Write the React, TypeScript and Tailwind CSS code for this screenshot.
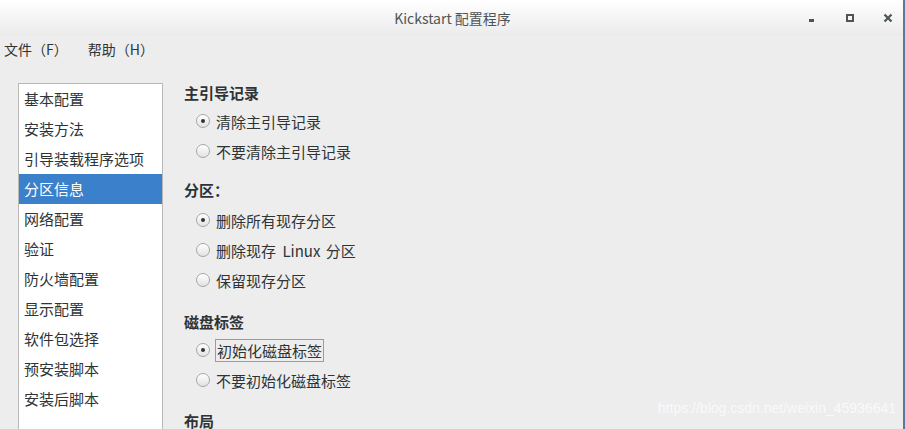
import { ReactNode } from "react";

const cjk = "font-['Noto_Sans_CJK_SC','Noto_Sans',sans-serif]";

const sections = [
  "基本配置",
  "安装方法",
  "引导装载程序选项",
  "分区信息",
  "网络配置",
  "验证",
  "防火墙配置",
  "显示配置",
  "软件包选择",
  "预安装脚本",
  "安装后脚本",
];

function Radio({ checked, focused, children }: { checked?: boolean; focused?: boolean; children: ReactNode }) {
  return (
    <div className="flex h-[30px] items-center pl-[12px]">
      <span className="flex h-[14px] w-[14px] items-center justify-center rounded-full border border-[#a4a6a6] bg-gradient-to-b from-[#ffffff] to-[#e2e2e2] shadow-[inset_0_1px_0_#fff]">
        {checked && <span className="h-[4px] w-[4px] rounded-full bg-[#2e3436]" />}
      </span>
      <span
        className={
          focused
            ? "ml-[5px] border border-[#9c9c9c] px-[1px] leading-[21px]"
            : "ml-[6px] leading-[21px]"
        }
      >
        {children}
      </span>
    </div>
  );
}

function Heading({ children }: { children: ReactNode }) {
  return <h3 className="h-[22px] font-bold leading-[22px]">{children}</h3>;
}

export default function App() {
  return (
    <div className={`relative flex h-[429px] w-[905px] flex-col overflow-hidden bg-[#ededed] text-[15px] text-[#2e3436] ${cjk}`}>
      {/* title bar */}
      <div className="flex h-[36px] shrink-0 items-center bg-gradient-to-b from-[#ffffff] to-[#ebebeb]">
        <div className="flex-1 pl-[100px] text-center text-[14px] text-[#4f5557]">Kickstart 配置程序</div>
        <div className="flex w-[100px] items-center pl-[4px] text-[#4d5558]">
          <span className="mt-[5px] h-[3px] w-[5px] bg-current" />
          <span className="ml-[32px] h-[8px] w-[8px] border-2 border-current" />
          <svg width="10" height="10" viewBox="0 0 10 10" className="ml-[29px]">
            <path d="M1.5 1.5 L8.5 8.5 M8.5 1.5 L1.5 8.5" stroke="currentColor" strokeWidth="2.2" />
          </svg>
        </div>
      </div>

      {/* menu bar */}
      <div className="flex h-[27px] shrink-0 items-center gap-[20px] pl-[4px] text-[14px] text-[#2e3436]">
        <span>文件（F）</span>
        <span>帮助（H）</span>
      </div>

      <div className="flex flex-1 pt-[20px] pl-[18px]">
        {/* section list */}
        <ul className="h-[400px] w-[145px] shrink-0 border border-[#b8b8b8] bg-white">
          {sections.map((s) => (
            <li
              key={s}
              className={
                s === "分区信息"
                  ? "h-[30px] bg-[#3a80cb] pl-[5px] leading-[30px] text-white"
                  : "h-[30px] pl-[5px] leading-[30px]"
              }
            >
              {s}
            </li>
          ))}
        </ul>

        {/* partition options */}
        <div className="-mt-[1px] flex flex-col pl-[21px]">
          <Heading>主引导记录</Heading>
          <div className="mt-[2px]">
            <Radio checked>清除主引导记录</Radio>
            <Radio>不要清除主引导记录</Radio>
          </div>
          <div className="mt-[13px]">
            <Heading>分区：</Heading>
          </div>
          <div className="mt-[4px]">
            <Radio checked>删除所有现存分区</Radio>
            <Radio>
              删除现存 <span className="ml-[3px] mr-[2px]">Linux</span> 分区
            </Radio>
            <Radio>保留现存分区</Radio>
          </div>
          <div className="mt-[16px]">
            <Heading>磁盘标签</Heading>
          </div>
          <div className="mt-[2px]">
            <Radio checked focused>
              初始化磁盘标签
            </Radio>
            <Radio>不要初始化磁盘标签</Radio>
          </div>
          <div className="mt-[15px]">
            <Heading>布局</Heading>
          </div>
        </div>
      </div>

      <div className="absolute right-[9px] bottom-[10px] font-['Liberation_Sans',sans-serif] text-[14px] text-white/70">
        https://blog.csdn.net/weixin_45936641
      </div>
      <div className="absolute top-0 right-0 bottom-0 w-[2px] bg-[#5a7a98]" />
    </div>
  );
}
